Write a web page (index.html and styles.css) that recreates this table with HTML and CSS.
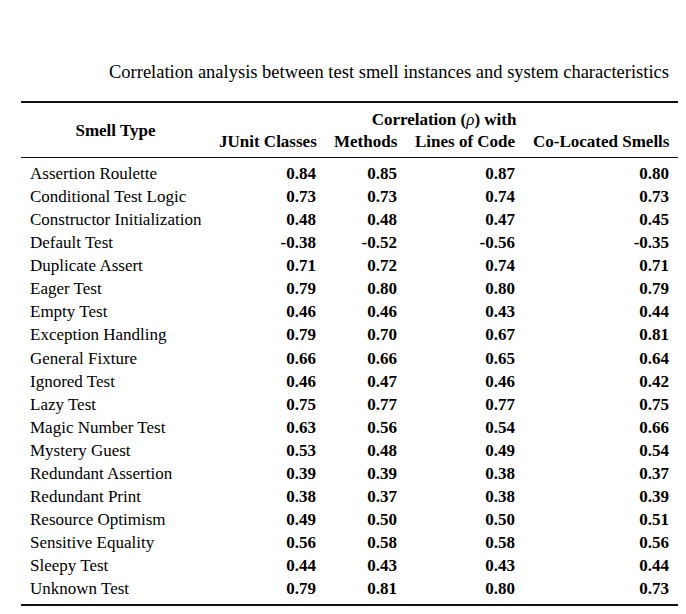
FILE: index.html
```html
<!DOCTYPE html>
<html>
<head>
<meta charset="utf-8">
<link rel="stylesheet" href="styles.css">
</head>
<body>
<div class="caption">Correlation analysis between test smell instances and system characteristics</div>
<table class="tbl">
<colgroup>
<col class="c1"><col class="c2"><col class="c3"><col class="c4"><col class="c5">
</colgroup>
<thead>
<tr class="hr1"><th rowspan="2" class="name-h">Smell Type</th><th colspan="4" class="group-h">Correlation (<i class="rho">ρ</i>) with</th></tr>
<tr class="hr2"><th>JUnit Classes</th><th>Methods</th><th>Lines of Code</th><th>Co-Located Smells</th></tr>
</thead>
<tbody>
<tr><td>Assertion Roulette</td><td>0.84</td><td>0.85</td><td>0.87</td><td>0.80</td></tr>
<tr><td>Conditional Test Logic</td><td>0.73</td><td>0.73</td><td>0.74</td><td>0.73</td></tr>
<tr><td>Constructor Initialization</td><td>0.48</td><td>0.48</td><td>0.47</td><td>0.45</td></tr>
<tr><td>Default Test</td><td>-0.38</td><td>-0.52</td><td>-0.56</td><td>-0.35</td></tr>
<tr><td>Duplicate Assert</td><td>0.71</td><td>0.72</td><td>0.74</td><td>0.71</td></tr>
<tr><td>Eager Test</td><td>0.79</td><td>0.80</td><td>0.80</td><td>0.79</td></tr>
<tr><td>Empty Test</td><td>0.46</td><td>0.46</td><td>0.43</td><td>0.44</td></tr>
<tr><td>Exception Handling</td><td>0.79</td><td>0.70</td><td>0.67</td><td>0.81</td></tr>
<tr><td>General Fixture</td><td>0.66</td><td>0.66</td><td>0.65</td><td>0.64</td></tr>
<tr><td>Ignored Test</td><td>0.46</td><td>0.47</td><td>0.46</td><td>0.42</td></tr>
<tr><td>Lazy Test</td><td>0.75</td><td>0.77</td><td>0.77</td><td>0.75</td></tr>
<tr><td>Magic Number Test</td><td>0.63</td><td>0.56</td><td>0.54</td><td>0.66</td></tr>
<tr><td>Mystery Guest</td><td>0.53</td><td>0.48</td><td>0.49</td><td>0.54</td></tr>
<tr><td>Redundant Assertion</td><td>0.39</td><td>0.39</td><td>0.38</td><td>0.37</td></tr>
<tr><td>Redundant Print</td><td>0.38</td><td>0.37</td><td>0.38</td><td>0.39</td></tr>
<tr><td>Resource Optimism</td><td>0.49</td><td>0.50</td><td>0.50</td><td>0.51</td></tr>
<tr><td>Sensitive Equality</td><td>0.56</td><td>0.58</td><td>0.58</td><td>0.56</td></tr>
<tr><td>Sleepy Test</td><td>0.44</td><td>0.43</td><td>0.43</td><td>0.44</td></tr>
<tr><td>Unknown Test</td><td>0.79</td><td>0.81</td><td>0.80</td><td>0.73</td></tr>
</tbody>
</table>
</body>
</html>
```
FILE: styles.css
```css
html, body {
  margin: 0;
  padding: 0;
  background: #ffffff;
}
body {
  font-family: "Liberation Serif", "Times New Roman", serif;
  font-size: 17px;
  color: #000000;
}
.caption {
  padding-top: 61px;
  padding-left: 109px;
  font-size: 18.5px;
  line-height: 23px;
  white-space: nowrap;
}
.tbl {
  margin-top: 17px;
  margin-left: 21px;
  width: 657px;
  table-layout: fixed;
  border-collapse: collapse;
  border-top: 2px solid #111111;
  border-bottom: 2px solid #111111;
}
.c1 { width: 189px; }
.c2 { width: 115px; }
.c3 { width: 81px; }
.c4 { width: 118px; }
.c5 { width: 154px; }
.tbl th, .tbl td {
  padding: 0 9px;
  white-space: nowrap;
}
.tbl th {
  font-weight: bold;
  text-align: right;
}
.tbl th.name-h {
  text-align: center;
  vertical-align: middle;
  line-height: 22px;
  padding-top: 2px;
  padding-bottom: 0;
}
.tbl th.group-h {
  text-align: center;
}
.rho {
  font-weight: normal;
}
.hr1 th {
  line-height: 23px;
  padding-top: 5px;
}
.hr2 th {
  line-height: 22px;
  padding-bottom: 4px;
}
.tbl thead tr.hr2 {
  border-bottom: 1px solid #111111;
}
.tbl td {
  line-height: 23.06px;
  text-align: right;
  font-weight: bold;
}
.tbl td:first-child {
  text-align: left;
  font-weight: normal;
}
.tbl tbody tr:first-child td {
  padding-top: 4px;
}
.tbl tbody tr:last-child td {
  padding-bottom: 4px;
}
```
